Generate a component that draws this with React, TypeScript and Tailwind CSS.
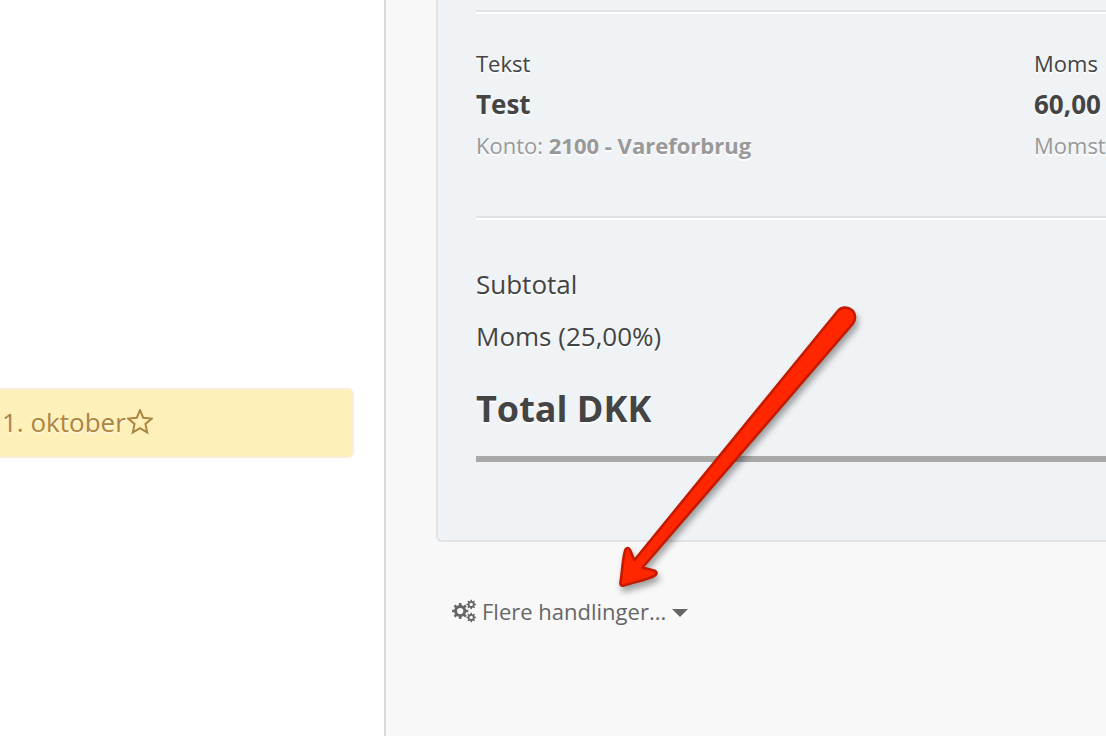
import React from "react";

function StarOutline() {
  return (
    <svg width="26" height="26" viewBox="0 0 26 26" fill="none" aria-hidden="true" className="shrink-0">
      <path
        d="M13 1.2 L16.2 8.7 L24.8 9.6 L18.4 15 L20.2 23.4 L13 19.2 L5.8 23.4 L7.6 15 L1.2 9.6 L9.8 8.7 Z"
        stroke="currentColor"
        strokeWidth="2"
        strokeLinejoin="miter"
      />
    </svg>
  );
}

function gearPath(cx: number, cy: number, outer: number, root: number, hole: number) {
  const teeth = 8;
  const step = (Math.PI * 2) / teeth;
  const points: string[] = [];
  for (let i = 0; i < teeth; i++) {
    const corners: [number, number][] = [
      [root, -0.27],
      [outer, -0.19],
      [outer, 0.19],
      [root, 0.27],
    ];
    for (const [r, offset] of corners) {
      const a = (i + offset) * step;
      points.push(`${(cx + r * Math.cos(a)).toFixed(2)} ${(cy + r * Math.sin(a)).toFixed(2)}`);
    }
  }
  const ring = `M${cx - hole} ${cy} a${hole} ${hole} 0 1 0 ${hole * 2} 0 a${hole} ${hole} 0 1 0 ${-hole * 2} 0 Z`;
  return `M${points.join(" L")} Z ${ring}`;
}

function Cogs() {
  return (
    <svg width="24" height="24" viewBox="0 0 24 24" fill="currentColor" fillRule="evenodd" aria-hidden="true" className="mr-[6px] shrink-0">
      <path d={gearPath(8.2, 12, 8.2, 6.1, 3.1)} />
      <path d={gearPath(19.2, 5.4, 4.8, 3.6, 1.7)} />
      <path d={gearPath(19.2, 18.4, 4.8, 3.6, 1.7)} />
    </svg>
  );
}

function Divider() {
  return <hr className="h-1 border-0 border-t-2 border-[#dfe3e6] bg-white" />;
}

function Arrow() {
  return (
    <svg
      width="270"
      height="310"
      viewBox="600 295 270 310"
      aria-hidden="true"
      className="pointer-events-none absolute top-[295px] left-[600px] drop-shadow-[2px_5px_3px_rgba(0,0,0,0.35)]"
    >
      <path
        d="M837.8 311 A9.3 9.3 0 0 1 852.6 324 L642.5 567.5 C647 569.3 652 569.4 655.3 571 Q658 573 655 575.4 C649 579.5 636 581.5 623.6 585.6 Q620.2 586.2 620.4 583 C622.4 571 622.5 558 625.3 549.8 Q627.5 546.5 630 549.8 C631.8 553 632.3 557 634.5 560 Z"
        fill="#ff2600"
        stroke="#c41a00"
        strokeWidth="2.6"
        strokeLinejoin="round"
      />
    </svg>
  );
}

export default function App() {
  return (
    <div className="relative flex min-h-screen overflow-hidden bg-[#f8f8f8] font-['Open_Sans','Noto_Sans',sans-serif] text-[#444444]">
      <aside className="w-[386px] shrink-0 border-r-2 border-[#d9d9d9] bg-white pt-[388px] pr-[30px]">
        <div className="flex h-[70px] items-center gap-px rounded-r-md border-2 border-l-0 border-[#fbeed5] bg-[#fef0b9] pb-[2px] pl-[2px] text-[26px] text-[#ad8440] [text-shadow:0_2px_0_rgba(255,255,255,0.5)]">
          <span>1. oktober</span>
          <StarOutline />
        </div>
      </aside>

      <main className="min-w-0 flex-1 pl-[50px]">
        <section className="rounded-bl-md border-b-2 border-l-2 border-[#e1e3e4] bg-[#eff3f6] pt-[10px] pb-[78px] pl-[38px] [text-shadow:0_2px_0_#fff]">
          <Divider />
          <div className="flex pt-[33px] pb-[55px] whitespace-nowrap">
            <div className="min-w-0 flex-1">
              <p className="text-[22px] leading-[32px]">Tekst</p>
              <p className="text-[26px] leading-[50px] font-bold">Test</p>
              <p className="text-[22px] leading-[32px] text-[#999999]">
                Konto: <strong>2100 - Vareforbrug</strong>
              </p>
            </div>
            <div className="w-[72px] shrink-0 overflow-hidden">
              <p className="text-[22px] leading-[32px]">Moms</p>
              <p className="text-[26px] leading-[50px] font-bold">60,00</p>
              <p className="text-[22px] leading-[32px] text-[#999999]">Momstype</p>
            </div>
          </div>
          <Divider />
          <div className="pt-[38px]">
            <p className="text-[26px] leading-[52px]">Subtotal</p>
            <p className="text-[26px] leading-[52px]">Moms (25,00%)</p>
            <p className="border-b-6 border-[#a9a9a9] pt-[17px] pb-[17px] text-[36px] leading-[60px] font-bold">Total DKK</p>
          </div>
        </section>
        <button
          type="button"
          className="mt-[53px] ml-4 flex items-center text-[22px] leading-[32px] text-[#666666]"
        >
          <Cogs />
          <span>Flere handlinger...</span>
          <svg width="16" height="8" viewBox="0 0 16 8" aria-hidden="true" className="mt-1 ml-[6px]">
            <path d="M0 0 H16 L8 8 Z" fill="currentColor" />
          </svg>
        </button>
      </main>

      <Arrow />
    </div>
  );
}
